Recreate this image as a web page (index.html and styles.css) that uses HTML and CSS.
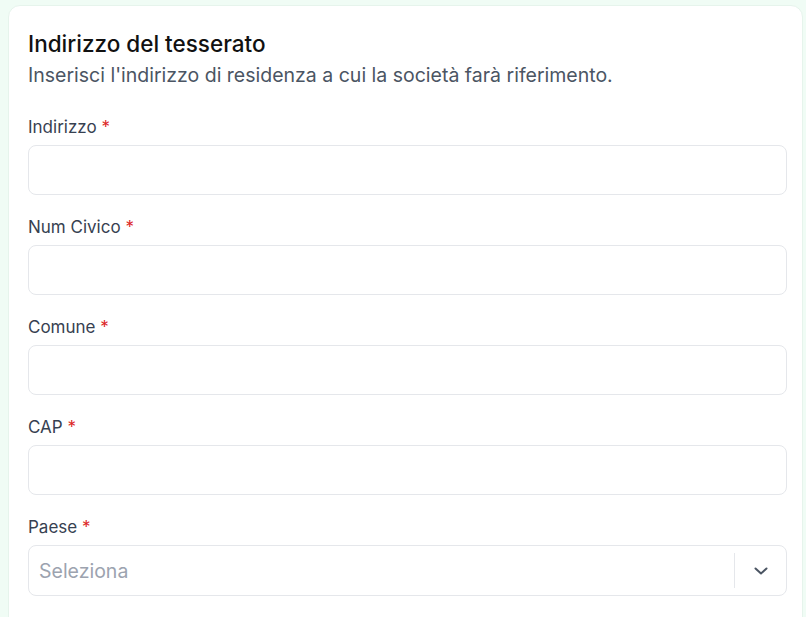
FILE: index.html
```html
<!DOCTYPE html>
<html lang="it">
<head>
<meta charset="utf-8">
<link rel="stylesheet" href="styles.css">
</head>
<body>
<div class="page">
  <section class="card">
    <h2 class="title">Indirizzo del tesserato</h2>
    <p class="subtitle">Inserisci l'indirizzo di residenza a cui la società farà riferimento.</p>
    <div class="field">
      <label class="label">Indirizzo <span class="req">*</span></label>
      <input class="input" type="text">
    </div>
    <div class="field">
      <label class="label">Num Civico <span class="req">*</span></label>
      <input class="input" type="text">
    </div>
    <div class="field">
      <label class="label">Comune <span class="req">*</span></label>
      <input class="input" type="text">
    </div>
    <div class="field">
      <label class="label">CAP <span class="req">*</span></label>
      <input class="input" type="text">
    </div>
    <div class="field">
      <label class="label">Paese <span class="req">*</span></label>
      <div class="select">
        <span class="placeholder">Seleziona</span>
        <span class="sep"></span>
        <span class="chev">
          <svg width="20" height="20" viewBox="0 0 20 20"><path d="M4.5 7.5 L10 12.5 L15.5 7.5" fill="none" stroke="#4b5563" stroke-width="2" stroke-linecap="round" stroke-linejoin="round"/></svg>
        </span>
      </div>
    </div>
  </section>
</div>
</body>
</html>
```
FILE: styles.css
```css
* { box-sizing: border-box; }
html, body { margin: 0; padding: 0; }
body {
  background: #f0fcf5;
  font-family: Inter, "Noto Sans", sans-serif;
  overflow: hidden;
  height: 617px;
}
.page { padding: 5px 3px 0 8px; }
.card {
  background: #fff;
  border: 1px solid #e6f4ec;
  border-radius: 12px;
  padding: 24px 15px 40px 19px;
  display: flex;
  flex-direction: column;
}
.title {
  margin: 0;
  font-size: 22.5px;
  font-weight: 500;
  color: #111111;
  line-height: 28px;
}
.subtitle {
  margin: 4px 0 0;
  font-size: 19.5px;
  color: #4b5563;
  line-height: 26px;
}
.field { display: flex; flex-direction: column; margin-top: 28px; }
.field + .field { margin-top: 21px; }
.label {
  font-size: 17px;
  color: #374151;
  line-height: 22px;
  margin-bottom: 7px;
}
.req { color: #dc2626; }
.input {
  height: 50px;
  border: 1px solid #e5e7eb;
  border-radius: 8px;
  background: #fff;
  font: inherit;
}
.select {
  height: 51px;
  border: 1px solid #e5e7eb;
  border-radius: 8px;
  display: flex;
  align-items: center;
  padding-left: 10px;
}
.placeholder { flex: 1; font-size: 19.5px; color: #9ca3af; }
.sep { width: 1px; align-self: stretch; margin: 7px 0; background: #e5e7eb; }
.chev { width: 51px; display: flex; justify-content: center; align-items: center; }
```
